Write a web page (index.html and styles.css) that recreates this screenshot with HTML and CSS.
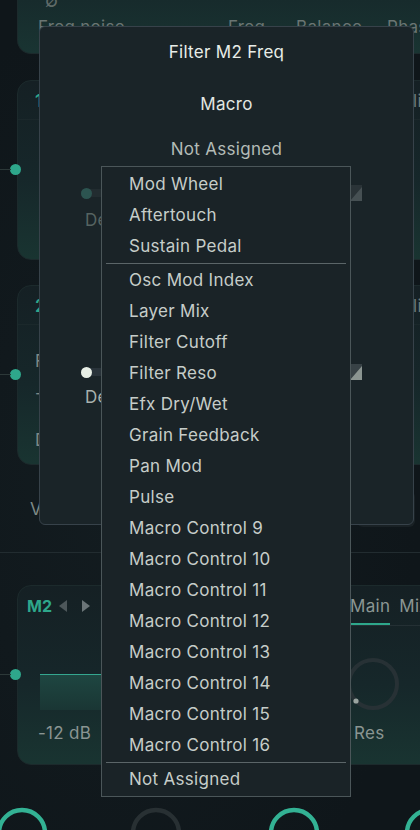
FILE: index.html
```html
<!DOCTYPE html>
<html>
<head>
<meta charset="utf-8">
<link rel="stylesheet" href="styles.css">
</head>
<body>
<div class="app">
  <div class="card card0">
    <div class="c0-icon">∅</div>
    <div class="c0-labels">
      <span class="l1">Freq noise</span>
      <span class="l2">Freq</span>
      <span class="l3">Balance</span>
      <span class="l4">Phase</span>
    </div>
  </div>

  <div class="card card1">
    <span class="port"></span>
    <div class="card-head"><span class="num">1</span><span class="right-tab">link</span></div>
  </div>

  <div class="card card2">
    <span class="port"></span>
    <div class="card-head"><span class="num">2</span><span class="right-tab">link</span></div>
    <div class="c2-rows">
      <div class="c2-l r1">Filter</div>
      <div class="c2-l r2">-3 st</div>
      <div class="c2-l r3">Drive</div>
    </div>
  </div>

  <div class="vrow">
    <span class="vlabel">Voices</span>
    <span class="vbox"></span>
  </div>
  <div class="divider"></div>

  <div class="card card3">
    <span class="port"></span>
    <div class="c3-head">
      <span class="m2">M2</span>
      <svg class="arr" width="9" height="12" viewBox="0 0 9 12"><polygon points="8,0 8,12 0,6" fill="#4d575a"/></svg>
      <svg class="arr arr-r" width="9" height="12" viewBox="0 0 9 12"><polygon points="1,0 1,12 9,6" fill="#6b7578"/></svg>
      <div class="tabs">
        <span class="tab active">Main</span>
        <span class="tab">Mix</span>
      </div>
    </div>
    <div class="c3-body">
      <div class="level"></div>
      <svg class="knob" width="56" height="56" viewBox="0 0 56 56"><circle cx="28" cy="28" r="24" fill="none" stroke="#273135" stroke-width="4"/><circle cx="11" cy="45" r="2.6" fill="#9aa4a0"/></svg>
    </div>
    <div class="c3-foot">
      <span class="db">-12 dB</span>
      <span class="res">Res</span>
    </div>
  </div>

  <div class="knobrow">
    <svg width="420" height="30" viewBox="0 0 420 30">
      <circle cx="22" cy="26" r="23" fill="none" stroke="#33b294" stroke-width="4.5"/>
      <circle cx="156" cy="26" r="23" fill="none" stroke="#283033" stroke-width="4.5"/>
      <circle cx="294" cy="26" r="23" fill="none" stroke="#33b294" stroke-width="4.5"/>
      <circle cx="430" cy="26" r="23" fill="none" stroke="#33b294" stroke-width="4.5"/>
    </svg>
  </div>

  <div class="dialog">
    <div class="dlg-title">Filter M2 Freq</div>
    <div class="dlg-sub">Macro</div>
    <div class="dlg-value">Not Assigned</div>
    <div class="srow dim">
      <div class="track"><span class="thumb"></span></div>
      <svg class="wedge" width="12" height="16" viewBox="0 0 12 16"><rect width="12" height="16" fill="#2a3337"/><polygon points="12,2 12,16 0,16" fill="#465053"/></svg>
    </div>
    <div class="slabel dim">Depth</div>
    <div class="srow on r2">
      <div class="track"><span class="thumb"></span></div>
      <svg class="wedge" width="12" height="16" viewBox="0 0 12 16"><rect width="12" height="16" fill="#384246"/><polygon points="12,2 12,16 0,16" fill="#8b9591"/></svg>
    </div>
    <div class="slabel on">Depth</div>
  </div>

  <div class="menu">
    <div class="item">Mod Wheel</div>
    <div class="item">Aftertouch</div>
    <div class="item">Sustain Pedal</div>
    <div class="sep"></div>
    <div class="item">Osc Mod Index</div>
    <div class="item">Layer Mix</div>
    <div class="item">Filter Cutoff</div>
    <div class="item">Filter Reso</div>
    <div class="item">Efx Dry/Wet</div>
    <div class="item">Grain Feedback</div>
    <div class="item">Pan Mod</div>
    <div class="item">Pulse</div>
    <div class="item">Macro Control 9</div>
    <div class="item">Macro Control 10</div>
    <div class="item">Macro Control 11</div>
    <div class="item">Macro Control 12</div>
    <div class="item">Macro Control 13</div>
    <div class="item">Macro Control 14</div>
    <div class="item">Macro Control 15</div>
    <div class="item">Macro Control 16</div>
    <div class="sep"></div>
    <div class="item">Not Assigned</div>
  </div>
</div>
</body>
</html>
```

FILE: styles.css
```css
* { box-sizing: border-box; }
html, body { margin: 0; padding: 0; }
body {
  width: 420px;
  height: 830px;
  overflow: hidden;
  background: #10171b;
  font-family: Inter, "Noto Sans", sans-serif;
  font-size: 17px;
  letter-spacing: 0.3px;
}
.app {
  position: relative;
  width: 420px;
  height: 830px;
  overflow: hidden;
  background: radial-gradient(ellipse at 30% 60%, #131c20 0%, #0f161a 70%);
}

/* background cards */
.card {
  position: relative;
  margin-left: 17px;
  width: 440px;
  border-radius: 14px;
  border: 1px solid #1c2a2c;
  background: linear-gradient(180deg, #152024 0%, #16272a 55%, #193431 100%);
}
.card0 {
  height: 54px;
  border-top: none;
  border-radius: 0 0 14px 14px;
  background: linear-gradient(180deg, #172b2c 0%, #193432 100%);
}
.c0-icon {
  position: absolute;
  left: 27px;
  top: -9px;
  line-height: 20px;
  color: #5f6a68;
  font-size: 19px;
}
.c0-labels {
  display: flex;
  padding: 16px 0 0 20px;
  color: #6a7573;
  line-height: 22px;
}
.c0-labels .l1 { width: 190px; }
.c0-labels .l2 { width: 68px; }
.c0-labels .l3 { width: 91px; }

.card1 { margin-top: 26px; height: 180px; }
.card2 { margin-top: 25px; height: 180px; }
.card3 { margin-top: 32px; height: 180px; }

.port {
  position: absolute;
  left: -8px;
  top: 83px;
  width: 11px;
  height: 11px;
  border-radius: 50%;
  background: #2ea78b;
}
.port::before {
  content: "";
  position: absolute;
  right: 10px;
  top: 5px;
  width: 14px;
  height: 1px;
  background: #2c3838;
}

.card-head {
  display: flex;
  justify-content: space-between;
  height: 39px;
  line-height: 40px;
  padding-left: 17px;
  border-bottom: 1px solid #1b282b;
}
.num { color: #2ea78b; font-weight: 600; }
.right-tab { width: 43px; color: #6e7977; }

.c2-rows { padding-left: 17px; color: #7d8885; }
.c2-l { line-height: 22px; }
.c2-l.r1 { margin-top: 25px; }
.c2-l.r2 { margin-top: 10px; }
.c2-l.r3 { margin-top: 25px; }

.vrow {
  display: flex;
  align-items: center;
  height: 87px;
  padding-left: 30px;
  color: #7f8a87;
}
.vbox {
  margin-left: auto;
  margin-right: 5px;
  width: 58px;
  height: 36px;
  border-radius: 6px;
  background: #192125;
}
.divider { height: 1px; background: #222c30; }

.c3-head {
  display: flex;
  align-items: center;
  height: 40px;
  padding-left: 9px;
}
.m2 { color: #2ea78b; font-weight: 700; font-size: 16px; margin-right: 7px; letter-spacing: 0; }
.arr { margin-right: 13px; }
.tabs {
  display: flex;
  margin-left: auto;
  width: 106px;
  height: 40px;
  border-bottom: 1px solid #243034;
}
.tab {
  color: #8b9693;
  line-height: 40px;
  margin-right: 9px;
}
.tab.active {
  box-shadow: inset 0 -2px 0 #2ea78b;
}
.c3-body {
  display: flex;
  align-items: flex-start;
  height: 95px;
  padding-top: 48px;
}
.level {
  margin-left: 22px;
  width: 120px;
  height: 36px;
  border-top: 1.5px solid #34a78f;
  background: linear-gradient(180deg, #1e4641 0%, #1a3634 100%);
}
.knob {
  margin-left: 185px;
  margin-top: -18px;
}
.c3-foot {
  display: flex;
  padding-left: 20px;
  color: #8a9592;
  line-height: 24px;
}
.db { width: 316px; }

.knobrow { margin-top: 42px; height: 30px; }
.knobrow svg { display: block; }

/* dialog */
.dialog {
  position: absolute;
  left: 39px;
  top: 26px;
  width: 375px;
  height: 499px;
  background: #1a2428;
  border: 1px solid #37424a;
  border-radius: 6px;
  text-align: center;
}
.dlg-title {
  margin-top: 13px;
  line-height: 24px;
  color: #e8ede8;
}
.dlg-sub {
  margin-top: 28px;
  line-height: 24px;
  color: #e2e7e2;
}
.dlg-value {
  margin-top: 21px;
  line-height: 24px;
  color: #b3bbb6;
}
.srow {
  display: flex;
  align-items: center;
  margin-top: 24px;
  height: 16px;
  padding-left: 41px;
  padding-right: 51px;
}
.srow.r2 { margin-top: 134px; }
.track {
  position: relative;
  flex: 1;
  height: 8px;
  border-radius: 4px 0 0 4px;
  background: #222c30;
}
.thumb {
  position: absolute;
  left: 0;
  top: -1.5px;
  width: 11px;
  height: 11px;
  border-radius: 50%;
  background: #2c5450;
}
.on .thumb { background: #e8efe6; }
.on .track { background: #29333a; }
.wedge { display: block; }
.slabel {
  text-align: left;
  padding-left: 45px;
  line-height: 20px;
}
.slabel.dim { margin-top: 9px; color: #566361; }
.slabel.on { margin-top: 7px; color: #a9b1ad; }

/* dropdown menu */
.menu {
  position: absolute;
  left: 101px;
  top: 166px;
  width: 250px;
  background: #1a2327;
  border: 1px solid #4b5659;
  padding: 1.5px 0;
}
.item {
  height: 31px;
  line-height: 31px;
  padding-left: 27px;
  color: #c6cdc9;
  white-space: nowrap;
}
.sep {
  height: 3px;
  margin: 0 4px;
  display: flex;
  align-items: center;
}
.sep::before {
  content: "";
  flex: 1;
  height: 1px;
  background: #5b6568;
}
```
